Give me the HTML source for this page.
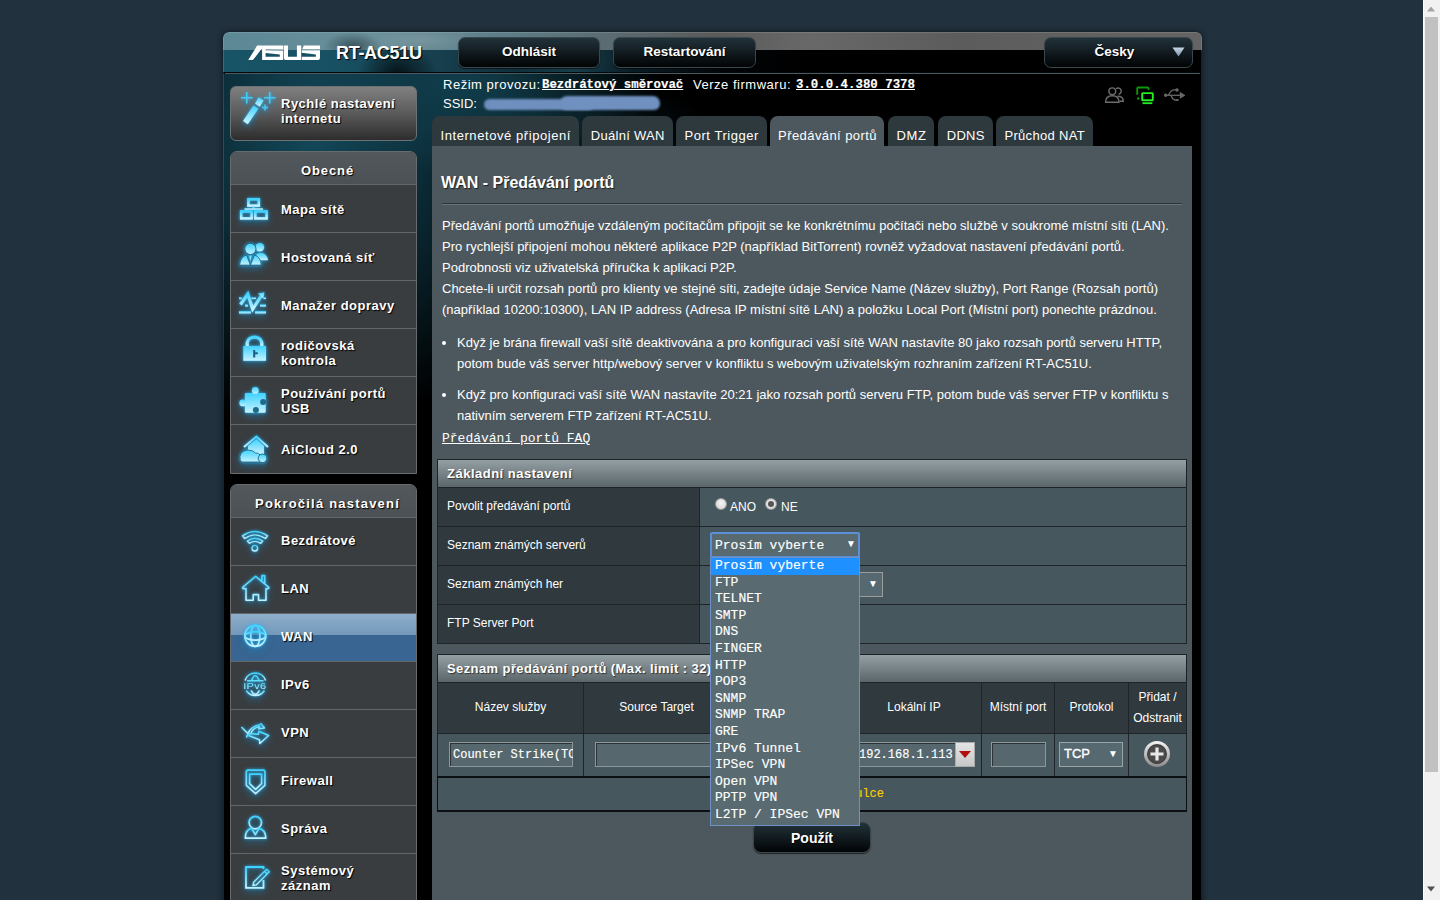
<!DOCTYPE html><html><head><meta charset="utf-8"><title>ASUS</title><style>
*{box-sizing:border-box;margin:0;padding:0}
html,body{width:1440px;height:900px;overflow:hidden}
body{background:#21313d;font-family:"Liberation Sans",sans-serif;color:#fff;position:relative}
.a{position:absolute}
.t{position:absolute;white-space:nowrap;line-height:1}
#wrap{position:absolute;left:223px;top:32px;width:979px;height:880px;background:#000;border-radius:6px 6px 0 0;overflow:hidden;box-shadow:0 0 5px 1px rgba(12,22,30,.7)}
.hbtn{position:absolute;border-radius:7px;background:linear-gradient(#21323a,#020405);border:1px solid #3a474c;box-shadow:0 1px 1px rgba(0,0,0,.6)}
.mt{font:bold 13px "Liberation Sans",sans-serif;letter-spacing:.5px;color:#fff;text-shadow:1px 1px 1px #000}
.grp{position:absolute;left:230px;width:187px;border:1px solid #676b6d;border-radius:7px 7px 0 0;background:#393d40;overflow:hidden}
.gh{position:absolute;left:0;top:0;width:185px;background:linear-gradient(#52585b,#4b5154)}
.sep{position:absolute;left:0;width:185px;height:1px;background:#62676a}
.ic{position:absolute;filter:drop-shadow(0 0 1.5px rgba(50,190,245,.9)) drop-shadow(0 3px 3px rgba(20,130,190,.55))}
.tab{position:absolute;top:116px;height:30px;border-radius:8px 8px 0 0;background:#2e393e}
.tabt{position:absolute;top:128px;padding-left:1px;font:13px "Liberation Sans",sans-serif;color:#fff}
.p{position:absolute;left:442px;font:13px "Liberation Sans",sans-serif;color:#fff;white-space:nowrap}
.lbl{font:12px "Liberation Sans",sans-serif;color:#fff}
.mono{font-family:"Liberation Mono",monospace;-webkit-text-stroke:.15px currentColor}
</style></head><body>
<div id="wrap">
<div class="a" style="left:0;top:0;width:979px;height:18px;background:radial-gradient(ellipse 30px 14px at 130px 14px,rgba(40,60,66,.7),rgba(0,0,0,0)),radial-gradient(ellipse 60px 12px at 200px 8px,rgba(150,170,175,.35),rgba(0,0,0,0)),linear-gradient(90deg,#5c8795 0%,#6a909b 15%,#5d7e88 28%,#5a6a70 40%,#5a5a5a 50%,#686868 60%,#5c5c5c 75%,#646464 100%)"></div>
<div class="a" style="left:0;top:18px;width:979px;height:22px;background:radial-gradient(ellipse 40px 30px at 175px 24px,rgba(0,0,0,.75),rgba(0,0,0,0)),linear-gradient(90deg,#175466 0%,#175062 12%,#173f4e 22%,#10303c 30%,#173e4b 36%,#0a1c24 42%,#020406 52%,#000 60%,#000 100%)"></div>
<div class="a" style="left:2px;top:40px;width:975px;height:1px;background:#05080a"></div>
<div class="a" style="left:2px;top:41px;width:975px;height:1px;background:#4b5a61"></div>
<div class="a" style="left:0;top:42px;width:979px;height:840px;background:radial-gradient(ellipse 250px 300px at 90px 60px,rgba(20,76,94,.95),rgba(16,62,78,.7) 45%,rgba(0,0,0,0) 100%),radial-gradient(ellipse 200px 90px at 240px 10px,rgba(20,72,88,.85),rgba(0,0,0,0) 100%),radial-gradient(ellipse 160px 60px at 330px 60px,rgba(18,60,74,.5),rgba(0,0,0,0) 100%)"></div>
<div class="a" style="left:0;top:0;width:979px;height:900px;border:1px solid rgba(255,255,255,.13);border-bottom:0;border-radius:6px 6px 0 0"></div>
</div>
<svg class="a" style="left:246px;top:44px" width="76" height="18" viewBox="246 44 76 18"><g fill="#fff" fill-rule="evenodd">
<path d="M248.2 60.1 L257.1 45.6 H262.1 V49.3 H261.3 L252.9 60.1 Z"/>
<path d="M262.1 45.6 H283.2 V60.1 H262.1 Z M265.6 49.2 L283.2 49.6 V50.5 L265.6 50.2 Z M265.6 52.9 L279.8 54.5 V56.8 H265.6 Z"/>
<path d="M283.8 45.6 H288 V56.8 H296.9 V45.6 H301.2 V60.1 H286.5 Q283.8 60.1 283.8 57.5 Z"/>
<path d="M302.3 49.3 L303.8 45.6 H320 V49.3 Z"/>
<path d="M301.7 50.2 H320 V57.5 Q320 60.1 317.5 60.1 H301.7 V56.8 H315.9 V54.5 L301.7 52.7 Z"/>
</g></svg>
<div class="t" style="left:336px;top:43px;font:bold 18px 'Liberation Sans',sans-serif;letter-spacing:-.3px;text-shadow:1px 1px 1px #000">RT-AC51U</div>
<div class="hbtn" style="left:458px;top:37px;width:142px;height:31px"></div>
<div class="t" style="left:458px;width:142px;text-align:center;top:44px;font:bold 13.5px 'Liberation Sans',sans-serif;text-shadow:1px 1px 1px #000">Odhlásit</div>
<div class="hbtn" style="left:613px;top:37px;width:143px;height:31px"></div>
<div class="t" style="left:613px;width:143px;text-align:center;top:44px;font:bold 13.5px 'Liberation Sans',sans-serif;text-shadow:1px 1px 1px #000">Restartování</div>
<div class="hbtn" style="left:1044px;top:37px;width:149px;height:31px"></div>
<div class="t" style="left:1040px;width:149px;text-align:center;top:44px;font:bold 13.5px 'Liberation Sans',sans-serif;text-shadow:1px 1px 1px #000">Česky</div>
<svg class="a" style="left:1172px;top:47px" width="13" height="10"><defs><linearGradient id="ag" x1="0" y1="0" x2="0" y2="1"><stop offset="0" stop-color="#c4d6e4"/><stop offset="1" stop-color="#7d95aa"/></linearGradient></defs><path d="M0.5 0.5 H12.5 L6.5 9.5 Z" fill="url(#ag)"/></svg>
<svg class="a" style="left:1104px;top:86px" width="21" height="18" viewBox="1104 86 21 18" fill="none" stroke="#6c6c6c" stroke-width="1.4">
<circle cx="1112.3" cy="91.3" r="3.4"/><path d="M1116.2 88.7 A3.1 3.1 0 1 1 1118.6 94.2"/><path d="M1105.6 102.3 C1105.6 97.5 1108.5 95.8 1112.3 95.8 C1116.1 95.8 1119 97.5 1119 102.3 Z"/><path d="M1117.5 96.2 C1121 96.2 1123.3 97.6 1123.3 101.3 H1119.6"/></svg>
<svg class="a" style="left:1134px;top:85px" width="22" height="21" viewBox="1134 85 22 21">
<path d="M1137.2 94.8 V88.5 Q1137.2 87.5 1138.2 87.5 H1147.5 Q1148.5 87.5 1148.5 88.8 V90" fill="none" stroke="#0b9a0b" stroke-width="1.8"/><circle cx="1138.3" cy="98.5" r="1.2" fill="#0b9a0b"/>
<rect x="1142.2" y="93.1" width="10.6" height="7.2" rx=".6" fill="none" stroke="#22ee22" stroke-width="1.9"/><path d="M1142.5 103.2 H1152.3" stroke="#22ee22" stroke-width="1.8"/></svg>
<svg class="a" style="left:1163px;top:88px" width="22" height="15" viewBox="1163 88 22 15" fill="none" stroke="#686868" stroke-width="1.3">
<path d="M1166 95.3 H1181"/><path d="M1180.5 93 L1184.3 95.3 L1180.5 97.6 Z" fill="#686868"/><circle cx="1165.7" cy="95.3" r="1.7" fill="#686868" stroke="none"/><path d="M1168.5 95.3 Q1170.5 90.5 1174 89.9 H1176"/><path d="M1171 95.3 Q1172.5 99.5 1175 100 H1177"/><circle cx="1177" cy="89.9" r="1.1" fill="#686868"/><rect x="1176.5" y="99" width="2" height="2" fill="#686868" stroke="none"/></svg>
<div class="t" style="left:443px;top:77px;font:13px 'Liberation Sans',sans-serif;letter-spacing:.52px">Režim provozu:</div>
<div class="t mono" style="left:542px;top:79px;font-size:12.4px;font-weight:bold;text-decoration:underline">Bezdrátový směrovač</div>
<div class="t" style="left:693px;top:77px;font:13px 'Liberation Sans',sans-serif;letter-spacing:.52px">Verze firmwaru:</div>
<div class="t mono" style="left:796px;top:79px;font-size:12.4px;font-weight:bold;text-decoration:underline">3.0.0.4.380_7378</div>
<div class="t" style="left:443px;top:96px;font:13px 'Liberation Sans',sans-serif">SSID:</div>
<div class="a" style="left:484px;top:99px;width:110px;height:11px;border-radius:6px;background:#6f8fbf;filter:blur(.8px)"></div>
<div class="a" style="left:560px;top:96px;width:100px;height:14px;border-radius:7px 7px 6px 6px;background:#7090c0;filter:blur(.8px)"></div>
<div class="a" style="left:230px;top:86px;width:187px;height:55px;border-radius:6px;border:1px solid #6e7173;background:linear-gradient(#808080,#5a5a5a 50%,#2d2d2d)"></div>
<svg class="ic" style="left:236px;top:86px" width="45" height="45" viewBox="0 0 45 45"><defs><linearGradient id="wg" x1="0" y1="0" x2="0" y2="1"><stop offset="0" stop-color="#3fd2ff"/><stop offset="1" stop-color="#d0f5ff"/></linearGradient></defs>
<g stroke="#46c8f0" stroke-width="1.5" fill="none"><path d="M5 11.75 H16.5 M10.75 6 V17.5"/><path d="M28 11.75 H39.5 M33.75 6 V17.5"/><path d="M26 21.5 H32 M29 18.5 V24.5"/></g>
<path d="M7 35 L17.5 19.5 L22.3 22.8 L11.8 38.3 Z" fill="url(#wg)"/><path d="M19 17.5 L22.8 11.3 L27.6 14.6 L23.8 20.8 Z" fill="url(#wg)"/></svg>
<div class="t mt" style="left:281px;top:96px">Rychlé nastavení</div>
<div class="t mt" style="left:281px;top:111px">internetu</div>
<div class="grp" style="top:151px;height:323px"><div class="gh" style="height:32px"></div>
<div class="sep" style="top:32px"></div>
<div class="sep" style="top:80px"></div>
<div class="sep" style="top:128px"></div>
<div class="sep" style="top:176px"></div>
<div class="sep" style="top:224px"></div>
<div class="sep" style="top:272px"></div>
</div>
<div class="t mt" style="left:234px;width:187px;text-align:center;top:163px;letter-spacing:0.9px">Obecné</div>
<svg class="ic" style="left:234px;top:184px" width="40" height="48" viewBox="0 0 40 48"><defs><linearGradient id="ig" x1="0" y1="0" x2="0" y2="1"><stop offset="0" stop-color="#3fd2ff"/><stop offset="1" stop-color="#c6f2ff"/></linearGradient></defs><g><g fill="none" stroke="url(#ig)" stroke-width="2.6"><rect x="14.4" y="15.3" width="10.4" height="6.3"/><rect x="7.2" y="27.4" width="10.4" height="7"/><rect x="21.3" y="27.4" width="11.3" height="7"/></g><path d="M19.6 22.5 V25 M10.5 25 H29" stroke="url(#ig)" stroke-width="1.6" fill="none"/></g></svg>
<div class="t mt" style="left:281px;top:202px">Mapa sítě</div>
<svg class="ic" style="left:234px;top:232px" width="40" height="48" viewBox="0 0 40 48"><defs><linearGradient id="ig" x1="0" y1="0" x2="0" y2="1"><stop offset="0" stop-color="#3fd2ff"/><stop offset="1" stop-color="#c6f2ff"/></linearGradient></defs><g><circle cx="25.8" cy="15.3" r="4.3" fill="url(#ig)"/><path d="M22 28.2 L22.5 22 Q25 20.8 28 20.9 Q33 22 34 28.2 Z" fill="url(#ig)"/><path d="M5.6 33.1 Q6.5 24.5 12.5 23 L16.4 33.1 L20.5 23 Q26.5 24.5 27.3 33.1 Z" fill="url(#ig)" stroke="#1d5f7a" stroke-width=".8"/><path d="M14.8 23.5 L16.4 29 L18 23.5 Z" fill="url(#ig)"/><circle cx="16.4" cy="16.9" r="5.6" fill="url(#ig)" stroke="#1d5f7a" stroke-width=".9"/></g></svg>
<div class="t mt" style="left:281px;top:250px">Hostovaná síť</div>
<svg class="ic" style="left:234px;top:280px" width="40" height="48" viewBox="0 0 40 48"><defs><linearGradient id="ig" x1="0" y1="0" x2="0" y2="1"><stop offset="0" stop-color="#3fd2ff"/><stop offset="1" stop-color="#c6f2ff"/></linearGradient></defs><g><g fill="url(#ig)"><rect x="5" y="17.3" width="2.8" height="1.8"/><rect x="17.5" y="17.3" width="4.5" height="1.8"/><rect x="29.5" y="17.3" width="2.5" height="1.8"/><rect x="11" y="24.4" width="3" height="2.2"/><rect x="26" y="24.4" width="6" height="2.2"/><rect x="5" y="31.1" width="12" height="2.4"/><rect x="21" y="31.1" width="11" height="2.4"/></g><path d="M6.5 24.5 L13.8 14 L18.7 29 L27.5 15.5" fill="none" stroke="url(#ig)" stroke-width="3.2" stroke-linejoin="miter"/><path d="M24 13.5 L30.5 12.2 L29.2 18.5 Z" fill="url(#ig)"/></g></svg>
<div class="t mt" style="left:281px;top:298px">Manažer dopravy</div>
<svg class="ic" style="left:234px;top:328px" width="40" height="48" viewBox="0 0 40 48"><defs><linearGradient id="ig" x1="0" y1="0" x2="0" y2="1"><stop offset="0" stop-color="#3fd2ff"/><stop offset="1" stop-color="#c6f2ff"/></linearGradient></defs><g><path d="M13.2 18 V14.5 A7.4 6.5 0 0 1 27.8 14.5 V18" fill="none" stroke="url(#ig)" stroke-width="3.3"/><rect x="9.3" y="17.9" width="22.7" height="14.9" fill="url(#ig)"/><path d="M20.2 21.9 V29.6 M21.3 25.3 H23.8" stroke="#1d6080" stroke-width="2.1" fill="none"/></g></svg>
<div class="t mt" style="left:281px;top:338px">rodičovská</div>
<div class="t mt" style="left:281px;top:353px">kontrola</div>
<svg class="ic" style="left:234px;top:376px" width="40" height="48" viewBox="0 0 40 48"><defs><linearGradient id="ig" x1="0" y1="0" x2="0" y2="1"><stop offset="0" stop-color="#3fd2ff"/><stop offset="1" stop-color="#c6f2ff"/></linearGradient></defs><g><rect x="10.9" y="17.1" width="20.8" height="19.7" rx="1" fill="url(#ig)"/><circle cx="21.3" cy="14.4" r="3.4" fill="url(#ig)"/><circle cx="8.8" cy="26.9" r="3.4" fill="url(#ig)"/><circle cx="29.1" cy="26.1" r="3" fill="#1f6a88"/><circle cx="21.9" cy="34" r="3" fill="#1f6a88"/></g></svg>
<div class="t mt" style="left:281px;top:386px">Používání portů</div>
<div class="t mt" style="left:281px;top:401px">USB</div>
<svg class="ic" style="left:234px;top:424px" width="40" height="48" viewBox="0 0 40 48"><defs><linearGradient id="ig" x1="0" y1="0" x2="0" y2="1"><stop offset="0" stop-color="#3fd2ff"/><stop offset="1" stop-color="#c6f2ff"/></linearGradient></defs><g><path d="M10 23 L22.4 12.5 L34 23" fill="none" stroke="url(#ig)" stroke-width="2"/><path d="M14 22 L22.4 15 L30 22 V30 H14 Z" fill="url(#ig)"/><path d="M8 38 Q5.5 37 6 32.5 Q7 26.5 14 26 Q19 26 21.5 29 Q25 28.5 26 31 V38 Z" fill="url(#ig)" stroke="#1d5f7a" stroke-width=".8"/><circle cx="28.5" cy="34.3" r="4.3" fill="url(#ig)" stroke="#1d5f7a" stroke-width=".9"/></g></svg>
<div class="t mt" style="left:281px;top:442px">AiCloud 2.0</div>
<div class="grp" style="top:484px;height:426px"><div class="gh" style="height:32px"></div>
<div class="sep" style="top:32px"></div>
<div class="sep" style="top:80px"></div>
<div class="sep" style="top:128px"></div>
<div class="a" style="left:0;top:129px;width:185px;height:47px;background:linear-gradient(#8eaecb,#7399bb 45%,#386591 45%,#386591)"></div>
<div class="sep" style="top:176px"></div>
<div class="sep" style="top:224px"></div>
<div class="sep" style="top:272px"></div>
<div class="sep" style="top:320px"></div>
<div class="sep" style="top:368px"></div>
</div>
<div class="t mt" style="left:234px;width:187px;text-align:center;top:496px;letter-spacing:1.2px">Pokročilá nastavení</div>
<svg class="ic" style="left:234px;top:517px" width="40" height="48" viewBox="0 0 40 48"><defs><linearGradient id="ig" x1="0" y1="0" x2="0" y2="1"><stop offset="0" stop-color="#3fd2ff"/><stop offset="1" stop-color="#c6f2ff"/></linearGradient></defs><g><g fill="none" stroke="url(#ig)" stroke-width="1.4" stroke-linejoin="round"><path d="M8.5 18.9 Q20.8 10 33.6 18.9 L31.5 21.5 Q20.8 14.2 10.7 21.5 Z"/><path d="M13.3 24 Q20.8 18.6 28.8 24 L26.7 26.3 Q20.8 22.5 15.5 26.3 Z"/><circle cx="20.8" cy="31.2" r="2.8"/></g></g></svg>
<div class="t mt" style="left:281px;top:533px">Bezdrátové</div>
<svg class="ic" style="left:234px;top:565px" width="40" height="48" viewBox="0 0 40 48"><defs><linearGradient id="ig" x1="0" y1="0" x2="0" y2="1"><stop offset="0" stop-color="#3fd2ff"/><stop offset="1" stop-color="#c6f2ff"/></linearGradient></defs><g><path d="M12 35.2 V23.6 H9.2 Q8 23 9 22 L21.6 11.3 L34.5 22 Q35.3 23 34 23.6 H32 V35.2 H24.5 V29.6 H19.2 V35.2 Z M27.9 16.2 V10.6 H30.7 V18.5" fill="none" stroke="url(#ig)" stroke-width="1.6" stroke-linejoin="round"/></g></svg>
<div class="t mt" style="left:281px;top:581px">LAN</div>
<svg class="ic" style="left:234px;top:613px" width="40" height="48" viewBox="0 0 40 48"><defs><linearGradient id="ig" x1="0" y1="0" x2="0" y2="1"><stop offset="0" stop-color="#3fd2ff"/><stop offset="1" stop-color="#c6f2ff"/></linearGradient></defs><g><g fill="none" stroke="url(#ig)" stroke-width="1.7"><circle cx="21.3" cy="22.9" r="10.5"/><ellipse cx="21.3" cy="22.9" rx="4.6" ry="10.5"/><ellipse cx="21.3" cy="22.9" rx="10.3" ry="4.2"/></g></g></svg>
<div class="t mt" style="left:281px;top:629px">WAN</div>
<svg class="ic" style="left:234px;top:661px" width="40" height="48" viewBox="0 0 40 48"><defs><linearGradient id="ig" x1="0" y1="0" x2="0" y2="1"><stop offset="0" stop-color="#3fd2ff"/><stop offset="1" stop-color="#c6f2ff"/></linearGradient></defs><g><g fill="none" stroke="url(#ig)" stroke-width="1.5"><path d="M11 19.5 A10.8 10.8 0 0 1 31.6 19.5"/><path d="M12.2 29.5 A10.8 10.8 0 0 0 30.4 29.5"/><path d="M17.5 19.5 Q21.3 10 25.1 19.5 M13 19.8 H29.5 M17 29.3 Q21.3 37 25.5 29.3"/></g><text x="20.8" y="27.7" font-family="Liberation Sans" font-size="9.2" fill="url(#ig)" text-anchor="middle" letter-spacing=".2" textLength="23" lengthAdjust="spacingAndGlyphs">IPv6</text></g></svg>
<div class="t mt" style="left:281px;top:677px">IPv6</div>
<svg class="ic" style="left:234px;top:709px" width="40" height="48" viewBox="0 0 40 48"><defs><linearGradient id="ig" x1="0" y1="0" x2="0" y2="1"><stop offset="0" stop-color="#3fd2ff"/><stop offset="1" stop-color="#c6f2ff"/></linearGradient></defs><g><g fill="none" stroke="url(#ig)" stroke-width="1.5" stroke-linejoin="round"><path d="M7.5 18 Q11 22 14 24.5 Q17 17 26.5 15.5"/><path d="M26.5 14.3 L30.5 19 L24.8 19.8 L25.5 17.5 Q19 18.5 16.5 25.2"/><path d="M12.5 28.5 Q13 25 16 24.5 L24.5 25.2 L24.8 22.3 L34.7 26.5 L25.8 34.5 L25.5 30.8 L14.5 26.5"/></g></g></svg>
<div class="t mt" style="left:281px;top:725px">VPN</div>
<svg class="ic" style="left:234px;top:757px" width="40" height="48" viewBox="0 0 40 48"><defs><linearGradient id="ig" x1="0" y1="0" x2="0" y2="1"><stop offset="0" stop-color="#3fd2ff"/><stop offset="1" stop-color="#c6f2ff"/></linearGradient></defs><g><g fill="none" stroke="url(#ig)" stroke-width="1.6" stroke-linejoin="round"><path d="M14 13.1 H29.2 Q30.9 13.1 30.9 14.8 V28.3 L21.6 36.6 L12.3 28.3 V14.8 Q12.3 13.1 14 13.1 Z"/><path d="M15.6 17.1 H27.6 V26.7 L21.6 32.4 L15.6 26.7 Z"/></g></g></svg>
<div class="t mt" style="left:281px;top:773px">Firewall</div>
<svg class="ic" style="left:234px;top:805px" width="40" height="48" viewBox="0 0 40 48"><defs><linearGradient id="ig" x1="0" y1="0" x2="0" y2="1"><stop offset="0" stop-color="#3fd2ff"/><stop offset="1" stop-color="#c6f2ff"/></linearGradient></defs><g><g fill="none" stroke="url(#ig)" stroke-width="1.7" stroke-linejoin="round"><circle cx="21.3" cy="17.6" r="6.2"/><path d="M11.3 33.1 Q11.3 24.5 17.5 23.3 L21.3 29.6 L25.1 23.3 Q31.5 24.5 31.8 33.1 Z"/></g></g></svg>
<div class="t mt" style="left:281px;top:821px">Správa</div>
<svg class="ic" style="left:234px;top:853px" width="40" height="48" viewBox="0 0 40 48"><defs><linearGradient id="ig" x1="0" y1="0" x2="0" y2="1"><stop offset="0" stop-color="#3fd2ff"/><stop offset="1" stop-color="#c6f2ff"/></linearGradient></defs><g><g fill="none" stroke="url(#ig)" stroke-width="1.8"><path d="M29.5 16 V14 H12 V34.9 H29.5 V27"/></g><path d="M19 32.5 L19.6 29.3 L32.7 16.2 L35.3 18.8 L22.2 31.9 Z M30.6 18.3 L33.2 20.9" fill="none" stroke="url(#ig)" stroke-width="1.4" stroke-linejoin="round"/></g></svg>
<div class="t mt" style="left:281px;top:863px">Systémový</div>
<div class="t mt" style="left:281px;top:878px">záznam</div>
<div class="tab" style="left:432px;width:146.5px;background:#2e393e"></div>
<div class="t tabt" style="left:432px;width:146.5px;text-align:center;letter-spacing:0.57px">Internetové připojení</div>
<div class="tab" style="left:582px;width:90.5px;background:#2e393e"></div>
<div class="t tabt" style="left:582px;width:90.5px;text-align:center;letter-spacing:0.3px">Duální WAN</div>
<div class="tab" style="left:676px;width:90.5px;background:#2e393e"></div>
<div class="t tabt" style="left:676px;width:90.5px;text-align:center;letter-spacing:0.55px">Port Trigger</div>
<div class="tab" style="left:770px;width:114px;background:#4d585e"></div>
<div class="t tabt" style="left:770px;width:114px;text-align:center;letter-spacing:0.42px">Předávání portů</div>
<div class="tab" style="left:888px;width:46px;background:#2e393e"></div>
<div class="t tabt" style="left:888px;width:46px;text-align:center;letter-spacing:0.6px">DMZ</div>
<div class="tab" style="left:938px;width:54.5px;background:#2e393e"></div>
<div class="t tabt" style="left:938px;width:54.5px;text-align:center;letter-spacing:0.25px">DDNS</div>
<div class="tab" style="left:996px;width:96.5px;background:#2e393e"></div>
<div class="t tabt" style="left:996px;width:96.5px;text-align:center;letter-spacing:0.33px">Průchod NAT</div>
<div class="a" style="left:432px;top:146px;width:760px;height:760px;background:#4d585e"></div>
<div class="t" style="left:441px;top:174px;font:bold 16px 'Liberation Sans',sans-serif;text-shadow:1px 1px 1px #1a1f22">WAN - Předávání portů</div>
<div class="a" style="left:442px;top:203px;width:740px;height:1px;background:#2c3438"></div>
<div class="a" style="left:442px;top:204px;width:740px;height:1px;background:#66757d"></div>
<div class="t p" style="top:218px">Předávání portů umožňuje vzdáleným počítačům připojit se ke konkrétnímu počítači nebo službě v soukromé místní síti (LAN).</div>
<div class="t p" style="top:239px">Pro rychlejší připojení mohou některé aplikace P2P (například BitTorrent) rovněž vyžadovat nastavení předávání portů.</div>
<div class="t p" style="top:260px">Podrobnosti viz uživatelská příručka k aplikaci P2P.</div>
<div class="t p" style="top:281px">Chcete-li určit rozsah portů pro klienty ve stejné síti, zadejte údaje Service Name (Název služby), Port Range (Rozsah portů)</div>
<div class="t p" style="top:302px">(například 10200:10300), LAN IP address (Adresa IP místní sítě LAN) a položku Local Port (Místní port) ponechte prázdnou.</div>
<div class="t p" style="left:457px;top:335px">Když je brána firewall vaší sítě deaktivována a pro konfiguraci vaší sítě WAN nastavíte 80 jako rozsah portů serveru HTTP,</div>
<div class="t p" style="left:457px;top:356px">potom bude váš server http/webový server v konfliktu s webovým uživatelským rozhraním zařízení RT-AC51U.</div>
<div class="t p" style="left:457px;top:387px">Když pro konfiguraci vaší sítě WAN nastavíte 20:21 jako rozsah portů serveru FTP, potom bude váš server FTP v konfliktu s</div>
<div class="t p" style="left:457px;top:408px">nativním serverem FTP zařízení RT-AC51U.</div>
<div class="a" style="left:442px;top:341px;width:4px;height:4px;border-radius:50%;background:#fff"></div>
<div class="a" style="left:442px;top:393px;width:4px;height:4px;border-radius:50%;background:#fff"></div>
<div class="t mono" style="left:442px;top:432px;font-size:13px;text-decoration:underline;color:#fff;-webkit-text-stroke:0">Předávání portů FAQ</div>
<div class="a" style="left:437px;top:459px;width:750px;height:29px;border:1px solid #1d2225;background:linear-gradient(#949fa4,#5b666b)"></div>
<div class="t mt" style="left:447px;top:466px;text-shadow:1px 1px 1px #333">Základní nastavení</div>
<div class="a" style="left:437px;top:487px;width:750px;height:157px;background:#1e2427"></div>
<div class="a" style="left:438px;top:488px;width:261px;height:38px;background:#2f393e"></div>
<div class="a" style="left:700px;top:488px;width:486px;height:38px;background:#46575d"></div>
<div class="t lbl" style="left:447px;top:499px">Povolit předávání portů</div>
<div class="a" style="left:438px;top:527px;width:261px;height:38px;background:#2f393e"></div>
<div class="a" style="left:700px;top:527px;width:486px;height:38px;background:#46575d"></div>
<div class="t lbl" style="left:447px;top:538px">Seznam známých serverů</div>
<div class="a" style="left:438px;top:566px;width:261px;height:38px;background:#2f393e"></div>
<div class="a" style="left:700px;top:566px;width:486px;height:38px;background:#46575d"></div>
<div class="t lbl" style="left:447px;top:577px">Seznam známých her</div>
<div class="a" style="left:438px;top:605px;width:261px;height:38px;background:#2f393e"></div>
<div class="a" style="left:700px;top:605px;width:486px;height:38px;background:#46575d"></div>
<div class="t lbl" style="left:447px;top:616px">FTP Server Port</div>
<div class="a" style="left:715px;top:498px;width:12px;height:12px;border-radius:50%;background:radial-gradient(circle at 50% 40%,#f4f4f4,#d0d0d0);border:1px solid #9a9a9a"></div>
<div class="a" style="left:765px;top:498px;width:12px;height:12px;border-radius:50%;background:radial-gradient(circle at 50% 40%,#f4f4f4,#d0d0d0);border:1px solid #9a9a9a"></div>
<div class="a" style="left:768px;top:501px;width:6px;height:6px;border-radius:50%;background:#555"></div>
<div class="t lbl" style="left:730px;top:500px;font-size:12px">ANO</div>
<div class="t lbl" style="left:781px;top:500px;font-size:12px">NE</div>
<div class="a" style="left:710px;top:572px;width:173px;height:25px;border:1px solid #9c9c9c;background:#566870"></div>
<div class="t" style="left:868px;top:579px;font-size:10px">▼</div>
<div class="a" style="left:710px;top:611px;width:60px;height:25px;border:1px solid #888;background:#566870"></div>
<div class="a" style="left:437px;top:654px;width:750px;height:29px;border:1px solid #1d2225;background:linear-gradient(#949fa4,#5b666b)"></div>
<div class="t mt" style="left:447px;top:661px;text-shadow:1px 1px 1px #333"><span style="letter-spacing:.4px">Seznam předávání portů (Max. limit : 32)</span></div>
<div class="a" style="left:437px;top:682px;width:750px;height:96px;background:#1e2427"></div>
<div class="a" style="left:438px;top:683px;width:145px;height:50px;background:#2f393e"></div>
<div class="a" style="left:438px;top:734px;width:145px;height:42px;background:#46575d"></div>
<div class="t lbl" style="left:438px;width:145px;text-align:center;top:700px">Název služby</div>
<div class="a" style="left:584px;top:683px;width:145px;height:50px;background:#2f393e"></div>
<div class="a" style="left:584px;top:734px;width:145px;height:42px;background:#46575d"></div>
<div class="t lbl" style="left:584px;width:145px;text-align:center;top:700px">Source Target</div>
<div class="a" style="left:730px;top:683px;width:116px;height:50px;background:#2f393e"></div>
<div class="a" style="left:730px;top:734px;width:116px;height:42px;background:#46575d"></div>
<div class="t lbl" style="left:730px;width:116px;text-align:center;top:700px">Rozsah portů</div>
<div class="a" style="left:847px;top:683px;width:134px;height:50px;background:#2f393e"></div>
<div class="a" style="left:847px;top:734px;width:134px;height:42px;background:#46575d"></div>
<div class="t lbl" style="left:847px;width:134px;text-align:center;top:700px">Lokální IP</div>
<div class="a" style="left:982px;top:683px;width:72px;height:50px;background:#2f393e"></div>
<div class="a" style="left:982px;top:734px;width:72px;height:42px;background:#46575d"></div>
<div class="t lbl" style="left:982px;width:72px;text-align:center;top:700px">Místní port</div>
<div class="a" style="left:1055px;top:683px;width:73px;height:50px;background:#2f393e"></div>
<div class="a" style="left:1055px;top:734px;width:73px;height:42px;background:#46575d"></div>
<div class="t lbl" style="left:1055px;width:73px;text-align:center;top:700px">Protokol</div>
<div class="a" style="left:1129px;top:683px;width:57px;height:50px;background:#2f393e"></div>
<div class="a" style="left:1129px;top:734px;width:57px;height:42px;background:#46575d"></div>
<div class="t lbl" style="left:1129px;width:57px;text-align:center;top:690px">Přidat /</div>
<div class="t lbl" style="left:1129px;width:57px;text-align:center;top:711px">Odstranit</div>
<div class="a" style="left:449px;top:742px;width:124px;height:25px;background:#56686e;border:1px solid #8d989c;box-shadow:inset 1px 1px 0 #2c3437"></div>
<div class="t mono" style="left:453px;top:749px;font-size:12px;width:120px;overflow:hidden">Counter Strike(TCP)</div>
<div class="a" style="left:595px;top:742px;width:125px;height:25px;background:#56686e;border:1px solid #8d989c;box-shadow:inset 1px 1px 0 #2c3437"></div>
<div class="a" style="left:740px;top:742px;width:95px;height:25px;background:#56686e;border:1px solid #8d989c;box-shadow:inset 1px 1px 0 #2c3437"></div>
<div class="a" style="left:852px;top:742px;width:104px;height:25px;background:#56686e;border:1px solid #8d989c;box-shadow:inset 1px 1px 0 #2c3437"></div>
<div class="t mono" style="left:859px;top:749px;font-size:12px">192.168.1.113</div>
<div class="a" style="left:955px;top:742px;width:20px;height:25px;background:linear-gradient(#e4e4e4,#c8c8c8);border:1px solid #aaa"></div>
<svg class="a" style="left:959px;top:751px" width="12" height="8"><path d="M0 0 H12 L6 7 Z" fill="#b01010"/></svg>
<div class="a" style="left:991px;top:742px;width:55px;height:25px;background:#56686e;border:1px solid #8d989c;box-shadow:inset 1px 1px 0 #2c3437"></div>
<div class="a" style="left:1059px;top:742px;width:64px;height:25px;border:1px solid #9aa3a6;background:#566870"></div>
<div class="t" style="left:1064px;top:746px;font:13px 'Liberation Sans',sans-serif;-webkit-text-stroke:.35px #fff">TCP</div>
<div class="t" style="left:1108px;top:749px;font-size:10px">▼</div>
<svg class="a" style="left:1143px;top:740px" width="28" height="28" viewBox="0 0 28 28">
<defs><linearGradient id="pg" x1="0" y1="0" x2="0" y2="1"><stop offset="0" stop-color="#f4f4f4"/><stop offset="1" stop-color="#8a8a8a"/></linearGradient></defs>
<circle cx="14" cy="14" r="13" fill="url(#pg)"/><circle cx="14" cy="14" r="10" fill="#3c3c3c"/><circle cx="14" cy="14" r="9" fill="#4a4a4a"/>
<path d="M14 7.5 V20.5 M7.5 14 H20.5" stroke="#e8e8e8" stroke-width="3.2"/></svg>
<div class="a" style="left:437px;top:776px;width:750px;height:36px;border:solid #0d1012;border-width:2px 1px 2px 1px;background:#46575d"></div>
<div class="t mono" style="left:740px;top:788px;font-size:12px;color:#ffcc00">Žádná data v tabulce</div>
<div class="hbtn" style="left:753px;top:822px;width:118px;height:31px;border-radius:8px"></div>
<div class="t" style="left:753px;width:118px;text-align:center;top:830px;font:bold 14px 'Liberation Sans',sans-serif;text-shadow:1px 1px 1px #000">Použít</div>
<div class="a" style="left:710px;top:532px;width:150px;height:26px;border:2px solid #5d8fd8;border-radius:2px;background:#586a70"></div>
<div class="t mono" style="left:715px;top:539px;font-size:13px">Prosím vyberte</div>
<div class="t" style="left:846px;top:539px;font-size:10px">▼</div>
<div class="a" style="left:710px;top:557px;width:150px;height:269px;border:1px solid #6f8fc8;background:#596a70"></div>
<div class="a" style="left:711px;top:558px;width:148px;height:17px;background:#1e90ff"></div>
<div class="t mono" style="left:715px;top:559.0px;font-size:13px">Prosím vyberte</div>
<div class="t mono" style="left:715px;top:575.6px;font-size:13px">FTP</div>
<div class="t mono" style="left:715px;top:592.2px;font-size:13px">TELNET</div>
<div class="t mono" style="left:715px;top:608.8px;font-size:13px">SMTP</div>
<div class="t mono" style="left:715px;top:625.4px;font-size:13px">DNS</div>
<div class="t mono" style="left:715px;top:642.0px;font-size:13px">FINGER</div>
<div class="t mono" style="left:715px;top:658.6px;font-size:13px">HTTP</div>
<div class="t mono" style="left:715px;top:675.2px;font-size:13px">POP3</div>
<div class="t mono" style="left:715px;top:691.8px;font-size:13px">SNMP</div>
<div class="t mono" style="left:715px;top:708.4px;font-size:13px">SNMP TRAP</div>
<div class="t mono" style="left:715px;top:725.0px;font-size:13px">GRE</div>
<div class="t mono" style="left:715px;top:741.6px;font-size:13px">IPv6 Tunnel</div>
<div class="t mono" style="left:715px;top:758.2px;font-size:13px">IPSec VPN</div>
<div class="t mono" style="left:715px;top:774.8px;font-size:13px">Open VPN</div>
<div class="t mono" style="left:715px;top:791.4px;font-size:13px">PPTP VPN</div>
<div class="t mono" style="left:715px;top:808.0px;font-size:13px">L2TP / IPSec VPN</div>
<div class="a" style="left:1423px;top:0;width:17px;height:900px;background:#f1f1f1;border-left:1px solid #fbfbfb"></div>
<div class="a" style="left:1425px;top:17px;width:13px;height:755px;background:#c1c1c1"></div>
<svg class="a" style="left:1426px;top:5px" width="10" height="7"><path d="M1 6.5 L5 1.5 L9 6.5 Z" fill="#a3a3a3"/></svg>
<svg class="a" style="left:1426px;top:886px" width="10" height="7"><path d="M1 0.5 L5 5.5 L9 0.5 Z" fill="#505050"/></svg>
</body></html>
